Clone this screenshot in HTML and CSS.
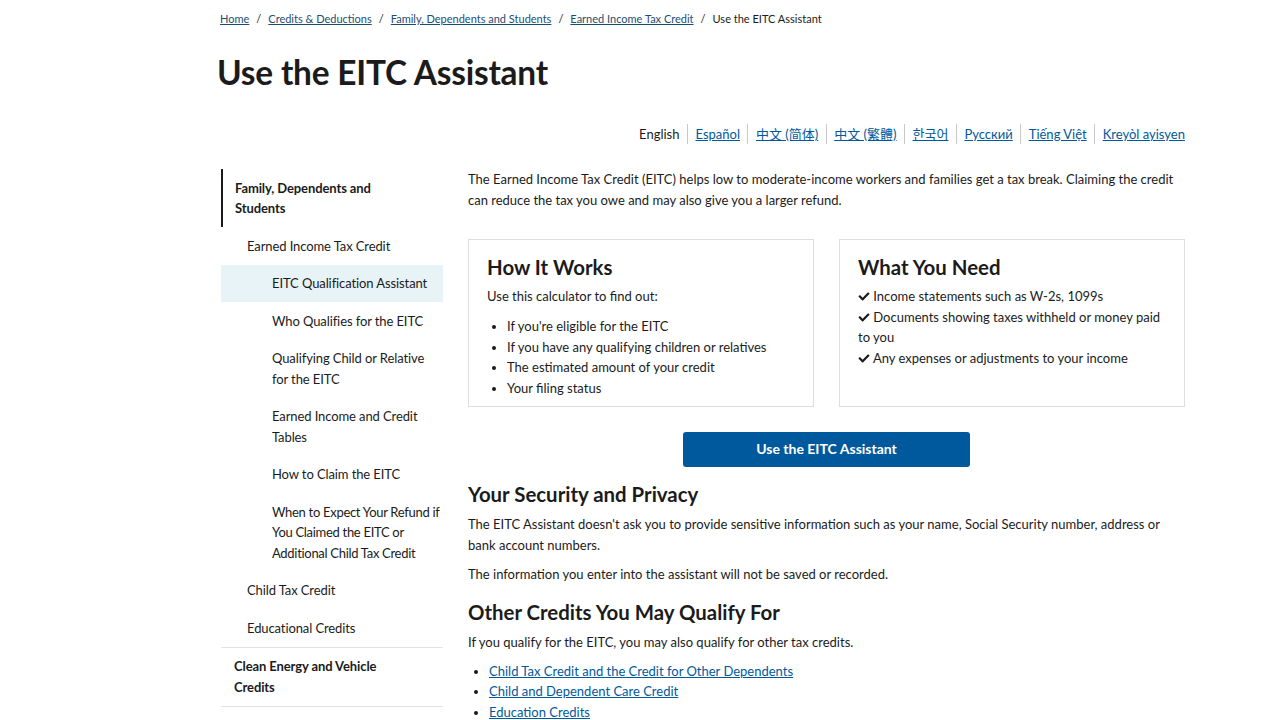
FILE: index.html
```html
<!DOCTYPE html>
<html lang="en">
<head>
<meta charset="utf-8">
<title>Use the EITC Assistant</title>
<link rel="stylesheet" href="styles.css">
</head>
<body>
<div class="page">
  <nav class="breadcrumb"><a href="#">Home</a><span class="sep">/</span><a href="#">Credits &amp; Deductions</a><span class="sep">/</span><a href="#">Family, Dependents and Students</a><span class="sep">/</span><a href="#">Earned Income Tax Credit</a><span class="sep">/</span><span class="current">Use the EITC Assistant</span></nav>
  <h1 class="title">Use the EITC Assistant</h1>
  <ul class="langs">
    <li class="lang-current">English</li>
    <li><a href="#">Español</a></li>
    <li><a href="#">中文 (简体)</a></li>
    <li><a href="#">中文 (繁體)</a></li>
    <li><a href="#">한국어</a></li>
    <li><a href="#">Русский</a></li>
    <li><a href="#">Tiếng Việt</a></li>
    <li><a href="#">Kreyòl ayisyen</a></li>
  </ul>
  <div class="layout">
    <aside class="sidenav">
      <div class="nav-item top active-parent">Family, Dependents and Students</div>
      <div class="nav-item lvl2">Earned Income Tax Credit</div>
      <div class="nav-item lvl3 current">EITC Qualification Assistant</div>
      <div class="nav-item lvl3">Who Qualifies for the EITC</div>
      <div class="nav-item lvl3">Qualifying Child or Relative for the EITC</div>
      <div class="nav-item lvl3">Earned Income and Credit Tables</div>
      <div class="nav-item lvl3">How to Claim the EITC</div>
      <div class="nav-item lvl3 tight">When to Expect Your Refund if You Claimed the EITC or Additional Child Tax Credit</div>
      <div class="nav-item lvl2">Child Tax Credit</div>
      <div class="nav-item lvl2">Educational Credits</div>
      <div class="nav-item top bordered">Clean Energy and Vehicle Credits</div>
      <div class="nav-item top bordered">Individuals and Families</div>
    </aside>
    <main class="content">
      <p class="intro">The Earned Income Tax Credit (EITC) helps low to moderate-income workers and families get a tax break. Claiming the credit can reduce the tax you owe and may also give you a larger refund.</p>
      <div class="cards">
        <section class="card">
          <h2 class="card-title">How It Works</h2>
          <p class="card-text">Use this calculator to find out:</p>
          <ul class="card-list">
            <li>If you're eligible for the EITC</li>
            <li>If you have any qualifying children or relatives</li>
            <li>The estimated amount of your credit</li>
            <li>Your filing status</li>
          </ul>
        </section>
        <section class="card">
          <h2 class="card-title">What You Need</h2>
          <p class="check"><svg class="check-icon" viewBox="0 0 512 512"><path d="M173.9 439.4l-166.4-166.4c-10-10-10-26.2 0-36.2l36.2-36.2c10-10 26.2-10 36.2 0L192 312.7 432.1 72.6c10-10 26.2-10 36.2 0l36.2 36.2c10 10 10 26.2 0 36.2l-294.4 294.4c-10 10-26.2 10-36.2 0z"/></svg> Income statements such as W-2s, 1099s</p>
          <p class="check"><svg class="check-icon" viewBox="0 0 512 512"><path d="M173.9 439.4l-166.4-166.4c-10-10-10-26.2 0-36.2l36.2-36.2c10-10 26.2-10 36.2 0L192 312.7 432.1 72.6c10-10 26.2-10 36.2 0l36.2 36.2c10 10 10 26.2 0 36.2l-294.4 294.4c-10 10-26.2 10-36.2 0z"/></svg> Documents showing taxes withheld or money paid to you</p>
          <p class="check"><svg class="check-icon" viewBox="0 0 512 512"><path d="M173.9 439.4l-166.4-166.4c-10-10-10-26.2 0-36.2l36.2-36.2c10-10 26.2-10 36.2 0L192 312.7 432.1 72.6c10-10 26.2-10 36.2 0l36.2 36.2c10 10 10 26.2 0 36.2l-294.4 294.4c-10 10-26.2 10-36.2 0z"/></svg> Any expenses or adjustments to your income</p>
        </section>
      </div>
      <div class="btn-row"><a class="btn" href="#">Use the EITC Assistant</a></div>
      <h2 class="section-title">Your Security and Privacy</h2>
      <p class="para">The EITC Assistant doesn't ask you to provide sensitive information such as your name, Social Security number, address or bank account numbers.</p>
      <p class="para">The information you enter into the assistant will not be saved or recorded.</p>
      <h2 class="section-title second">Other Credits You May Qualify For</h2>
      <p class="para">If you qualify for the EITC, you may also qualify for other tax credits.</p>
      <ul class="link-list">
        <li><a href="#">Child Tax Credit and the Credit for Other Dependents</a></li>
        <li><a href="#">Child and Dependent Care Credit</a></li>
        <li><a href="#">Education Credits</a></li>
      </ul>
    </main>
  </div>
</div>
</body>
</html>
```
FILE: styles.css
```css
* { box-sizing: border-box; }
html, body { margin: 0; padding: 0; background: #fff; }
body {
  font-family: "Lato", "Noto Sans CJK SC", sans-serif;
  color: #1b1b1b;
  font-size: 13px;
  line-height: 20.5px;
}
a { color: #00599c; }
.page {
  margin-left: 220px;
  width: 965px;
  padding-top: 10px;
}
.breadcrumb {
  display: flex;
  align-items: baseline;
  font-size: 11px;
  line-height: 18px;
}
.breadcrumb a { color: #1d4e72; }
.breadcrumb .sep { margin: 0 7px; color: #1b1b1b; }
.title {
  font-size: 33.4px;
  line-height: 40px;
  font-weight: 700;
  margin: 24px 0 0 -3px;
  letter-spacing: -0.2px;
}
.langs {
  list-style: none;
  margin: 32px 0 0;
  padding: 0;
  display: flex;
  justify-content: flex-end;
  line-height: 20px;
}
.langs li {
  padding: 0 7.5px;
  border-left: 1px solid #c9c9c9;
}
.langs li:first-child { border-left: none; }
.langs li:last-child { padding-right: 0; }
.layout {
  display: flex;
  gap: 25px;
  margin-top: 25px;
}
.sidenav {
  width: 223px;
  flex: none;
  padding-left: 1px;
  letter-spacing: -0.1px;
}
.nav-item {
  padding: 8.5px 10px 8.5px 0;
}
.nav-item.top {
  font-weight: 700;
  padding-left: 13px;
  padding-right: 40px;
}
.nav-item.active-parent {
  border-left: 2px solid #1b1b1b;
  padding-left: 12px;
}
.nav-item.bordered {
  border-top: 1px solid #dfe1e2;
}
.nav-item.lvl2 { padding-left: 26px; }
.nav-item.lvl3 { padding-left: 51px; padding-right: 0; }
.nav-item.tight { letter-spacing: -0.3px; }
.nav-item.current { background: #e7f3f6; }
.content {
  flex: 1;
  min-width: 0;
}
.content p { margin: 0; }
.cards {
  display: grid;
  grid-template-columns: 1fr 1fr;
  gap: 25px;
  margin-top: 29px;
}
.card {
  border: 1px solid #dcdee0;
  padding: 14px 18px 8px;
  min-height: 168px;
}
.card-title {
  font-size: 20.4px;
  line-height: 26px;
  margin: 0 0 6px;
  font-weight: 700;
}
.card-list {
  margin: 9.5px 0 0;
  padding-left: 20px;
}
.check-icon {
  width: 12px;
  height: 11px;
  fill: #1b1b1b;
  vertical-align: -1px;
}
.btn-row {
  display: flex;
  justify-content: center;
  margin-top: 25px;
}
.btn {
  display: flex;
  align-items: center;
  justify-content: center;
  width: 287px;
  height: 35px;
  background: #00599c;
  color: #fff;
  font-weight: 700;
  font-size: 14px;
  text-decoration: none;
  border-radius: 3px;
}
.section-title {
  font-size: 20.4px;
  line-height: 26px;
  font-weight: 700;
  margin: 14px 0 7px;
}
.section-title.second { margin-top: 15px; }
.para + .para { margin-top: 8.5px; }
.link-list {
  margin: 8px 0 0;
  padding-left: 21px;
}
```
